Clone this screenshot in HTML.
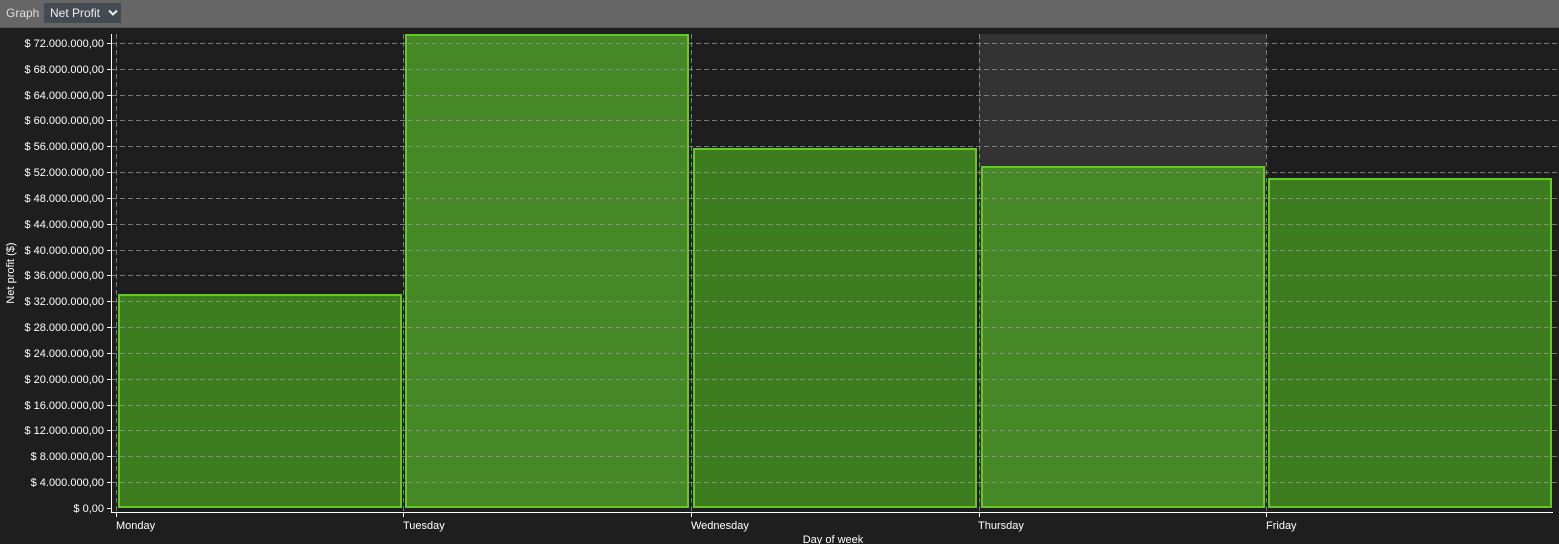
<!DOCTYPE html>
<html><head><style>
body{margin:0;background:#1e1e1e;width:1559px;height:544px;overflow:hidden;font-family:"Liberation Sans",sans-serif}
.bar{position:absolute;top:0;left:0;width:1559px;height:27px;background:#666;border-bottom:1px solid #555}
</style></head><body>
<div class="bar">
<span style="position:absolute;left:6px;top:6px;font-size:12px;color:#ddd">Graph</span>
<div style="position:absolute;left:44px;top:3px;width:77px;height:20px;background:#444a52"><span style="position:absolute;left:6px;top:3px;font-size:12px;color:#eee">Net Profit</span>
<svg style="position:absolute;left:64px;top:6px" width="10" height="8"><path d="M1 1.5 L5 5.5 L9 1.5" stroke="#eee" stroke-width="2" fill="none"/></svg></div>
</div>
<svg width="1559" height="544" style="position:absolute;top:0;left:0" font-family="Liberation Sans, sans-serif" font-size="11" fill="#fff">
<rect x="979" y="34" width="287" height="474" fill="#333"/>
<g stroke="#63c923" stroke-width="2">
<rect x="119" y="295" width="282" height="212" fill="#3e7d1f"/>
<rect x="406" y="35" width="282" height="472" fill="#468726"/>
<rect x="694" y="149" width="282" height="358" fill="#3e7d1f"/>
<rect x="982" y="167" width="282" height="340" fill="#468726"/>
<rect x="1269" y="179" width="282" height="328" fill="#3e7d1f"/>
</g>
<g stroke="#9a9a9a" stroke-opacity="0.75" stroke-dasharray="5,3" stroke-width="1">
<line x1="116.5" y1="34" x2="116.5" y2="511"/><line x1="403.5" y1="34" x2="403.5" y2="511"/><line x1="691.5" y1="34" x2="691.5" y2="511"/><line x1="979.5" y1="34" x2="979.5" y2="511"/><line x1="1266.5" y1="34" x2="1266.5" y2="511"/>
<g id="h"></g>
</g>
<g id="g" stroke="#9a9a9a" stroke-opacity="0.75" stroke-dasharray="5,3"></g>
<line x1="111.5" y1="34" x2="111.5" y2="513" stroke="#fff"/>
<line x1="111" y1="512.5" x2="1553" y2="512.5" stroke="#fff"/>
<g id="t" text-anchor="end"></g>
<g stroke="#fff"><line x1="116.5" y1="512" x2="116.5" y2="517"/><line x1="403.5" y1="512" x2="403.5" y2="517"/><line x1="691.5" y1="512" x2="691.5" y2="517"/><line x1="979.5" y1="512" x2="979.5" y2="517"/><line x1="1266.5" y1="512" x2="1266.5" y2="517"/></g>
<text x="116" y="529">Monday</text><text x="403" y="529">Tuesday</text><text x="691" y="529">Wednesday</text><text x="978" y="529">Thursday</text><text x="1266" y="529">Friday</text>
<text x="833" y="543" text-anchor="middle">Day of week</text>
<text transform="translate(14,273) rotate(-90)" text-anchor="middle">Net profit ($)</text>
<text x="104" y="47" text-anchor="end">$ 72.000.000,00</text><text x="104" y="73" text-anchor="end">$ 68.000.000,00</text><text x="104" y="99" text-anchor="end">$ 64.000.000,00</text><text x="104" y="124" text-anchor="end">$ 60.000.000,00</text><text x="104" y="150" text-anchor="end">$ 56.000.000,00</text><text x="104" y="176" text-anchor="end">$ 52.000.000,00</text><text x="104" y="202" text-anchor="end">$ 48.000.000,00</text><text x="104" y="228" text-anchor="end">$ 44.000.000,00</text><text x="104" y="254" text-anchor="end">$ 40.000.000,00</text><text x="104" y="279" text-anchor="end">$ 36.000.000,00</text><text x="104" y="305" text-anchor="end">$ 32.000.000,00</text><text x="104" y="331" text-anchor="end">$ 28.000.000,00</text><text x="104" y="357" text-anchor="end">$ 24.000.000,00</text><text x="104" y="383" text-anchor="end">$ 20.000.000,00</text><text x="104" y="409" text-anchor="end">$ 16.000.000,00</text><text x="104" y="434" text-anchor="end">$ 12.000.000,00</text><text x="104" y="460" text-anchor="end">$ 8.000.000,00</text><text x="104" y="486" text-anchor="end">$ 4.000.000,00</text><text x="104" y="512" text-anchor="end">$ 0,00</text>
<g stroke="#9a9a9a" stroke-opacity="0.75" stroke-dasharray="5,3">
<line x1="112" x2="1559" y1="43.5" y2="43.5"/><line x1="112" x2="1559" y1="69.5" y2="69.5"/><line x1="112" x2="1559" y1="95.5" y2="95.5"/><line x1="112" x2="1559" y1="120.5" y2="120.5"/><line x1="112" x2="1559" y1="146.5" y2="146.5"/><line x1="112" x2="1559" y1="172.5" y2="172.5"/><line x1="112" x2="1559" y1="198.5" y2="198.5"/><line x1="112" x2="1559" y1="224.5" y2="224.5"/><line x1="112" x2="1559" y1="250.5" y2="250.5"/><line x1="112" x2="1559" y1="275.5" y2="275.5"/><line x1="112" x2="1559" y1="301.5" y2="301.5"/><line x1="112" x2="1559" y1="327.5" y2="327.5"/><line x1="112" x2="1559" y1="353.5" y2="353.5"/><line x1="112" x2="1559" y1="379.5" y2="379.5"/><line x1="112" x2="1559" y1="405.5" y2="405.5"/><line x1="112" x2="1559" y1="430.5" y2="430.5"/><line x1="112" x2="1559" y1="456.5" y2="456.5"/><line x1="112" x2="1559" y1="482.5" y2="482.5"/>
</g>
<g stroke="#fff"><line x1="107" x2="111" y1="43.5" y2="43.5"/><line x1="107" x2="111" y1="69.5" y2="69.5"/><line x1="107" x2="111" y1="95.5" y2="95.5"/><line x1="107" x2="111" y1="120.5" y2="120.5"/><line x1="107" x2="111" y1="146.5" y2="146.5"/><line x1="107" x2="111" y1="172.5" y2="172.5"/><line x1="107" x2="111" y1="198.5" y2="198.5"/><line x1="107" x2="111" y1="224.5" y2="224.5"/><line x1="107" x2="111" y1="250.5" y2="250.5"/><line x1="107" x2="111" y1="275.5" y2="275.5"/><line x1="107" x2="111" y1="301.5" y2="301.5"/><line x1="107" x2="111" y1="327.5" y2="327.5"/><line x1="107" x2="111" y1="353.5" y2="353.5"/><line x1="107" x2="111" y1="379.5" y2="379.5"/><line x1="107" x2="111" y1="405.5" y2="405.5"/><line x1="107" x2="111" y1="430.5" y2="430.5"/><line x1="107" x2="111" y1="456.5" y2="456.5"/><line x1="107" x2="111" y1="482.5" y2="482.5"/><line x1="107" x2="111" y1="508.5" y2="508.5"/></g>
</svg>
</body></html>
